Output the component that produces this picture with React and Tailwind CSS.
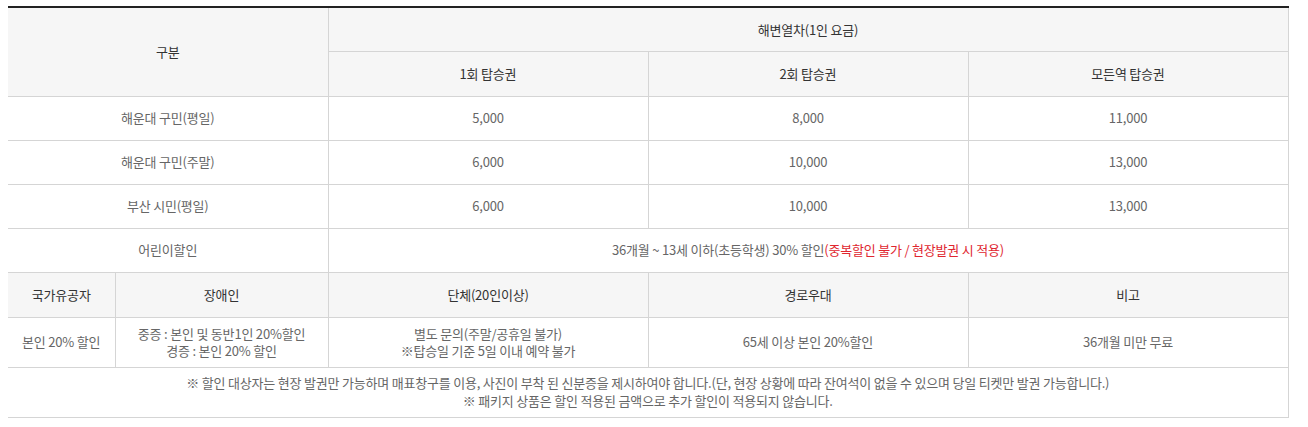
const rows = [
  { label: "해운대 구민(평일)", values: ["5,000", "8,000", "11,000"] },
  { label: "해운대 구민(주말)", values: ["6,000", "10,000", "13,000"] },
  { label: "부산 시민(평일)", values: ["6,000", "10,000", "13,000"] },
];

const th = "border border-[#d5d5d5] bg-[#f6f6f6] text-[#333] font-normal text-center align-middle";
const td = "border border-[#d5d5d5] text-[#666] text-center align-middle";

export default function App() {
  return (
    <div
      className="bg-white w-[1308px] h-[427px] pt-[6px] pl-[8px]"
      style={{ fontFamily: '"Noto Sans CJK KR", "Noto Sans", sans-serif' }}
    >
      <table className="w-[1280px] border-collapse table-fixed text-[13px] tracking-[-0.2px] border-t-2 border-t-[#222]">
        <colgroup>
          <col className="w-[107px]" />
          <col className="w-[213px]" />
          <col className="w-[320px]" />
          <col className="w-[320px]" />
          <col className="w-[320px]" />
        </colgroup>
        <thead>
          <tr className="h-[44px]">
            <th colSpan={2} rowSpan={2} className={`${th} border-l-0 border-t-0`}>구분</th>
            <th colSpan={3} className={`${th} border-t-0`}>해변열차(1인 요금)</th>
          </tr>
          <tr className="h-[45px]">
            <th className={`${th} font-medium`}>1회 탑승권</th>
            <th className={`${th} font-medium`}>2회 탑승권</th>
            <th className={`${th} font-medium`}>모든역 탑승권</th>
          </tr>
        </thead>
        <tbody>
          {rows.map((r) => (
            <tr key={r.label} className="h-[44px]">
              <td colSpan={2} className={`${td} border-l-0`}>{r.label}</td>
              {r.values.map((v, i) => (
                <td key={i} className={td}>{v}</td>
              ))}
            </tr>
          ))}
          <tr className="h-[44px]">
            <td colSpan={2} className={`${td} border-l-0`}>어린이할인</td>
            <td colSpan={3} className={td}>
              36개월 ~ 13세 이하(초등학생) 30% 할인
              <span className="text-[#e0262f]">(중복할인 불가 / 현장발권 시 적용)</span>
            </td>
          </tr>
          <tr className="h-[45px]">
            <th className={`${th} font-bold border-l-0`}>국가유공자</th>
            <th className={`${th} font-bold`}>장애인</th>
            <th className={`${th} font-bold`}>단체(20인이상)</th>
            <th className={`${th} font-bold`}>경로우대</th>
            <th className={`${th} font-bold`}>비고</th>
          </tr>
          <tr className="h-[50px]">
            <td className={`${td} border-l-0`}>본인 20% 할인</td>
            <td className={`${td} leading-[17px]`}>
              중증 : 본인 및 동반1인 20%할인
              <br />
              경증 : 본인 20% 할인
            </td>
            <td className={`${td} leading-[17px]`}>
              별도 문의(주말/공휴일 불가)
              <br />
              ※탑승일 기준 5일 이내 예약 불가
            </td>
            <td className={td}>65세 이상 본인 20%할인</td>
            <td className={td}>36개월 미만 무료</td>
          </tr>
          <tr className="h-[50px]">
            <td colSpan={5} className={`${td} border-l-0 leading-[18px]`}>
              ※ 할인 대상자는 현장 발권만 가능하며 매표창구를 이용, 사진이 부착 된 신분증을 제시하여야 합니다.(단, 현장 상황에 따라 잔여석이 없을 수 있으며 당일 티켓만 발권 가능합니다.)
              <br />
              ※ 패키지 상품은 할인 적용된 금액으로 추가 할인이 적용되지 않습니다.
            </td>
          </tr>
        </tbody>
      </table>
    </div>
  );
}
